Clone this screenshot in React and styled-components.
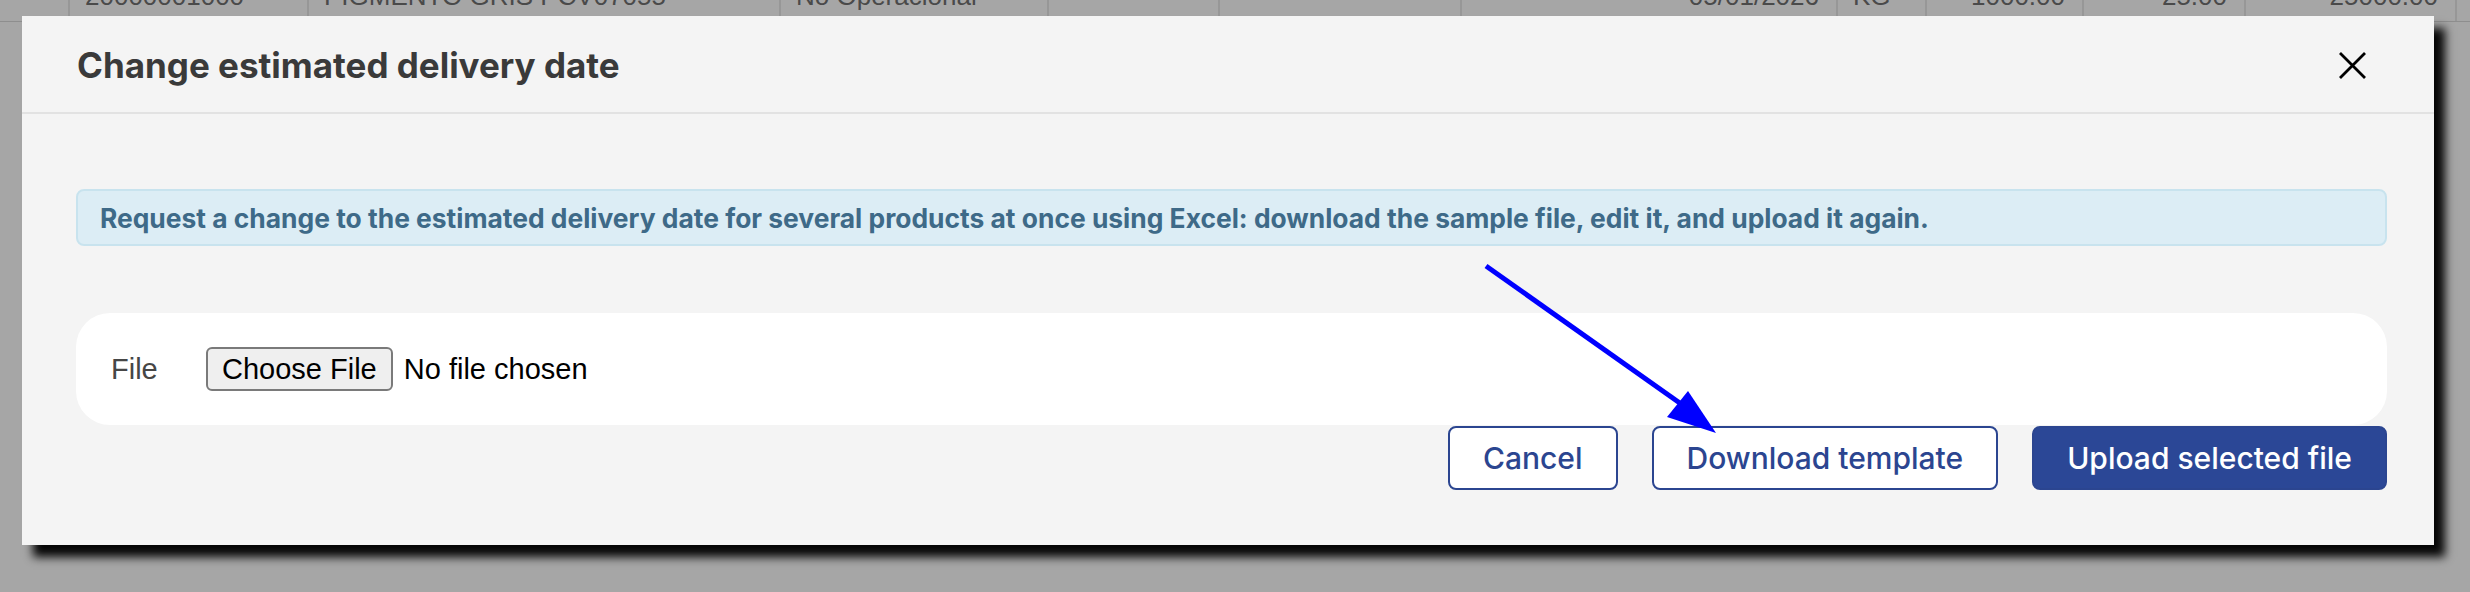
import React from 'react';
import styled, { createGlobalStyle } from 'styled-components';

const GlobalStyle = createGlobalStyle`
  html, body {
    margin: 0;
    padding: 0;
    background: #a6a6a6;
    overflow: hidden;
  }
  * {
    box-sizing: border-box;
  }
`;

const Page = styled.div`
  position: relative;
  width: 2470px;
  height: 592px;
  overflow: hidden;
  background: #a6a6a6;
  font-family: 'Liberation Sans', Arial, sans-serif;
`;

const BackRow = styled.div`
  display: flex;
  margin-top: -30px;
  height: 52px;
  border-bottom: 1px solid #8e8e8e;
`;

const BackCell = styled.div`
  flex: 0 0 ${({ $w }) => $w}px;
  padding: 0 17px 0 15px;
  line-height: 52px;
  font-size: 26px;
  color: #4a4a4a;
  white-space: nowrap;
  overflow: hidden;
  text-align: ${({ $right }) => ($right ? 'right' : 'left')};
  border-left: ${({ $first }) => ($first ? 'none' : '2px solid #979797')};
`;

const Overlay = styled.div`
  position: absolute;
  inset: 0;
  padding: 16px 36px 0 22px;
`;

const Modal = styled.div`
  background: #f4f4f4;
  box-shadow: 11px 12px 9px rgba(0, 0, 0, 0.97);
`;

const Header = styled.div`
  display: flex;
  align-items: center;
  justify-content: space-between;
  height: 98px;
  padding: 2px 67px 0 55px;
  border-bottom: 2px solid #e2e2e2;
`;

const Title = styled.h2`
  margin: 0;
  font-family: Inter, 'Liberation Sans', sans-serif;
  font-weight: 700;
  font-size: 35px;
  color: #3a3a3a;
`;

const CloseButton = styled.button`
  display: flex;
  align-items: center;
  justify-content: center;
  padding: 0;
  border: 0;
  background: transparent;
  width: 30px;
  height: 30px;
`;

const Body = styled.div`
  padding: 75px 47px 55px 54px;
`;

const Alert = styled.div`
  display: flex;
  align-items: center;
  height: 57px;
  padding: 0 22px 0;
  background: #dcedf5;
  border: 2px solid #c8e3ee;
  border-radius: 8px;
  font-family: Inter, 'Liberation Sans', sans-serif;
  font-weight: 700;
  font-size: 26.4px;
  color: #3e6a88;
  white-space: nowrap;
`;

const FileBox = styled.div`
  display: flex;
  align-items: center;
  margin-top: 67px;
  height: 112px;
  padding: 0 0 0 35px;
  background: #ffffff;
  border-radius: 34px;
`;

const FileLabel = styled.span`
  width: 95px;
  font-size: 29px;
  color: #464646;
`;

const ChooseButton = styled.span`
  display: inline-flex;
  align-items: center;
  height: 44px;
  padding: 0 14px;
  background: #efefef;
  border: 2px solid #7a7a7a;
  border-radius: 6px;
  font-size: 29px;
  color: #000;
`;

const FileStatus = styled.span`
  margin-left: 11px;
  font-size: 29px;
  color: #000;
`;

const Actions = styled.div`
  display: flex;
  justify-content: flex-end;
  gap: 34px;
  margin-top: 1px;
`;

const ActionButton = styled.button`
  height: 64px;
  padding: 0 ${({ $pad }) => $pad}px;
  border-radius: 8px;
  border: 2px solid #2b4590;
  background: ${({ $primary }) => ($primary ? '#2b4796' : '#ffffff')};
  color: ${({ $primary }) => ($primary ? '#ffffff' : '#2b4590')};
  font-family: Inter, 'Liberation Sans', sans-serif;
  font-weight: 500;
  font-size: 30px;
`;

const Annotation = styled.svg`
  position: absolute;
  left: 0;
  top: 0;
  pointer-events: none;
`;

const backCells = [
  { w: 68, t: '', first: true },
  { w: 239, t: '20000001000' },
  { w: 472, t: 'PIGMENTO GRIS PCV07055' },
  { w: 268, t: 'No Operacional' },
  { w: 171, t: '' },
  { w: 242, t: '' },
  { w: 376, t: '05/01/2026', right: true },
  { w: 89, t: 'KG' },
  { w: 157, t: '1000.00', right: true },
  { w: 162, t: '25.00', right: true },
  { w: 211, t: '25000.00', right: true },
  { w: 15, t: '' },
];

export default function App() {
  return (
    <Page>
      <GlobalStyle />
      <BackRow>
        {backCells.map((c, i) => (
          <BackCell key={i} $w={c.w} $right={c.right} $first={c.first}>
            {c.t}
          </BackCell>
        ))}
      </BackRow>
      <Overlay>
        <Modal>
          <Header>
            <Title>Change estimated delivery date</Title>
            <CloseButton aria-label="Close">
              <svg width="27" height="27" viewBox="0 0 27 27">
                <path d="M1 1 L26 26 M26 1 L1 26" stroke="#000" strokeWidth="2.8" />
              </svg>
            </CloseButton>
          </Header>
          <Body>
            <Alert>
              Request a change to the estimated delivery date for several products at once using Excel: download the sample file, edit it, and upload it again.
            </Alert>
            <FileBox>
              <FileLabel>File</FileLabel>
              <ChooseButton>Choose File</ChooseButton>
              <FileStatus>No file chosen</FileStatus>
            </FileBox>
            <Actions>
              <ActionButton $pad={33}>Cancel</ActionButton>
              <ActionButton $pad={33}>Download template</ActionButton>
              <ActionButton $pad={33} $primary>Upload selected file</ActionButton>
            </Actions>
          </Body>
        </Modal>
      </Overlay>
      <Annotation width="2470" height="592">
        <line x1="1486" y1="266" x2="1684" y2="406" stroke="#0000ff" strokeWidth="5" />
        <polygon points="1716,433 1667,417 1688,391" fill="#0000ff" />
      </Annotation>
    </Page>
  );
}
